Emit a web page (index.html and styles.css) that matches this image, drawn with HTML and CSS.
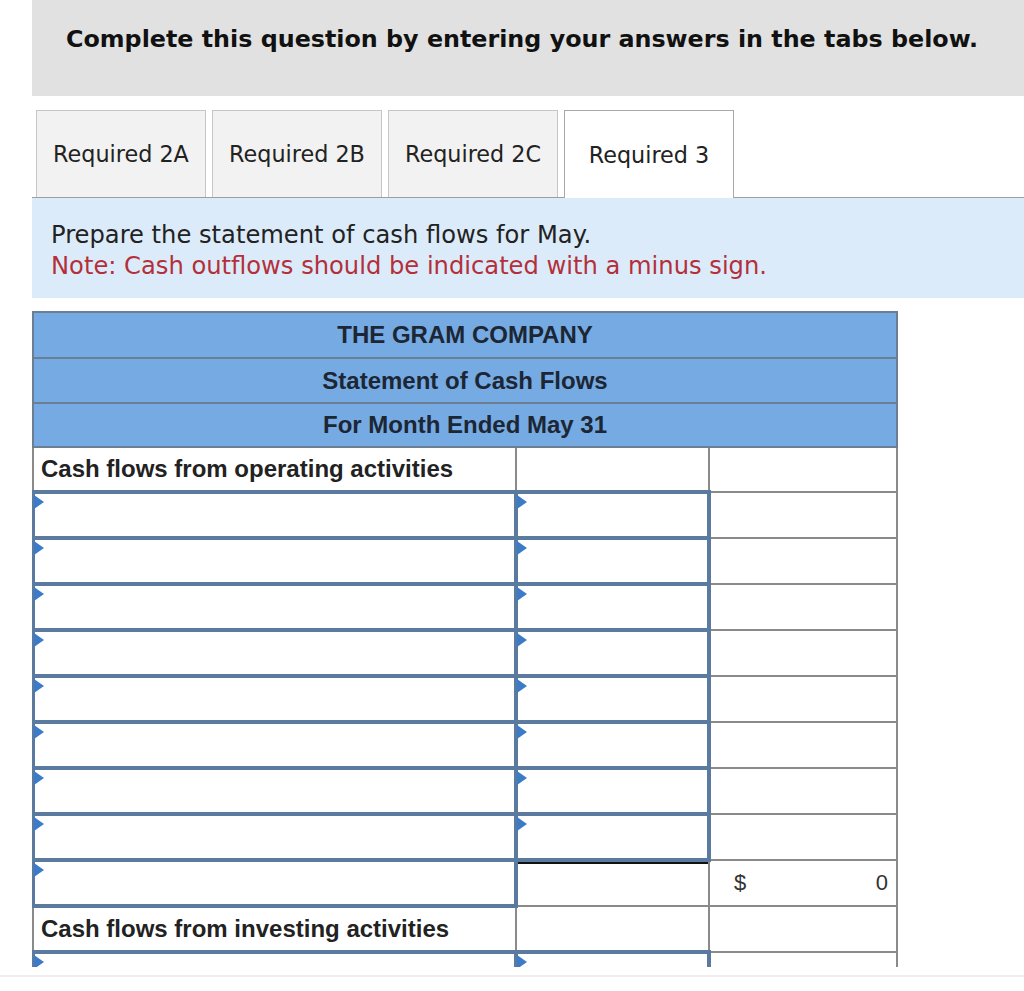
FILE: index.html
```html
<!DOCTYPE html>
<html lang="en">
<head>
<meta charset="utf-8">
<title>Statement of Cash Flows</title>
<link rel="stylesheet" href="styles.css">
</head>
<body>
<div class="page">
  <div class="banner"><h1>Complete this question by entering your answers in the tabs below.</h1></div>
  <div class="tabs">
    <div class="tab">Required 2A</div>
    <div class="tab">Required 2B</div>
    <div class="tab">Required 2C</div>
    <div class="tab active">Required 3</div>
  </div>
  <div class="prompt">
    <p>Prepare the statement of cash flows for May.</p>
    <p class="note">Note: Cash outflows should be indicated with a minus sign.</p>
  </div>
  <div class="sheet-clip">
    <table class="sheet">
      <colgroup><col class="c1"><col class="c2"><col class="c3"></colgroup>
      <tr class="hd h1"><th colspan="3">THE GRAM COMPANY</th></tr>
      <tr class="hd h2"><th colspan="3">Statement of Cash Flows</th></tr>
      <tr class="hd h3"><th colspan="3">For Month Ended May 31</th></tr>
      <tr><td class="label">Cash flows from operating activities</td><td></td><td></td></tr>
      <tr><td class="in"><span class="flag"></span></td><td class="in"><span class="flag"></span></td><td></td></tr>
      <tr><td class="in"><span class="flag"></span></td><td class="in"><span class="flag"></span></td><td></td></tr>
      <tr><td class="in"><span class="flag"></span></td><td class="in"><span class="flag"></span></td><td></td></tr>
      <tr><td class="in"><span class="flag"></span></td><td class="in"><span class="flag"></span></td><td></td></tr>
      <tr><td class="in"><span class="flag"></span></td><td class="in"><span class="flag"></span></td><td></td></tr>
      <tr><td class="in"><span class="flag"></span></td><td class="in"><span class="flag"></span></td><td></td></tr>
      <tr><td class="in"><span class="flag"></span></td><td class="in"><span class="flag"></span></td><td></td></tr>
      <tr><td class="in"><span class="flag"></span></td><td class="in"><span class="flag"></span></td><td></td></tr>
      <tr><td class="in"><span class="flag"></span></td><td class="total"></td><td class="amount"><span>$</span><span>0</span></td></tr>
      <tr><td class="label">Cash flows from investing activities</td><td></td><td></td></tr>
      <tr><td class="in"><span class="flag"></span></td><td class="in"><span class="flag"></span></td><td></td></tr>
    </table>
  </div>
  <div class="footer"></div>
</div>
</body>
</html>
```
FILE: styles.css
```css
html, body {
  margin: 0;
  background: #ffffff;
}
body {
  font-family: "DejaVu Sans", Verdana, sans-serif;
  color: #222222;
}
.page {
  padding-left: 32px;
}
.banner {
  background: #e1e1e1;
  height: 96px;
  box-sizing: border-box;
  padding: 25px 0 0 34px;
}
.banner h1 {
  margin: 0;
  font-size: 23.8px;
  line-height: 28px;
  font-weight: bold;
  color: #111111;
  white-space: nowrap;
}
.tabs {
  margin-top: 14px;
  display: flex;
  align-items: flex-end;
  gap: 6px;
  padding-left: 4px;
  border-bottom: 1px solid #9e9e9e;
  height: 87px;
}
.tab {
  box-sizing: border-box;
  width: 170px;
  height: 87px;
  border: 1px solid #c6c6c6;
  border-bottom: none;
  background: #f2f2f2;
  display: flex;
  align-items: center;
  justify-content: center;
  font-size: 22.3px;
  color: #222222;
}
.tab.active {
  background: #ffffff;
  border-color: #a8a8a8;
  height: 88px;
  margin-bottom: -1px;
}
.prompt {
  background: #dcebf9;
  height: 100px;
  box-sizing: border-box;
  padding: 22px 19px 0;
}
.prompt p {
  margin: 0;
  font-size: 24.2px;
  line-height: 31px;
  color: #222222;
  white-space: nowrap;
}
.prompt .note {
  color: #b3303a;
}
.sheet-clip {
  margin-top: 13px;
  height: 656px;
  overflow: hidden;
}
.sheet {
  width: 864px;
  margin-left: -1px;
  table-layout: fixed;
  border-collapse: collapse;
  font-family: "Liberation Sans", Arial, sans-serif;
  font-size: 24px;
}
.c1 { width: 483px; }
.c2 { width: 193px; }
.c3 { width: 188px; }
.sheet th {
  background: #76aae2;
  color: #1c2634;
  font-weight: bold;
  text-align: center;
  padding: 0;
  border: 2px solid #6a7f94;
}
.hd.h1 th { height: 44px; }
.hd.h2 th { height: 43px; }
.hd.h3 th { height: 42px; }
.sheet td {
  height: 42px;
  padding: 0;
  border: 2px solid #8a8a8a;
  background: #ffffff;
}
.sheet td.label {
  font-weight: bold;
  color: #222222;
  padding-left: 7px;
  white-space: nowrap;
}
.sheet td.in {
  border: 4px solid #5b7a9f;
  position: relative;
}
.flag {
  position: absolute;
  z-index: 2;
  left: -1px;
  top: 1px;
  width: 0;
  height: 0;
  border-left: 10px solid #3b7bc8;
  border-top: 7px solid transparent;
  border-bottom: 7px solid transparent;
}
.sheet td.total {
  box-shadow: inset 0 2px 0 #111111;
}
.sheet td.amount {
  font-size: 22px;
  color: #333333;
}
.sheet td.amount span:first-child {
  float: left;
  margin-left: 24px;
}
.sheet td.amount span:last-child {
  float: right;
  margin-right: 8px;
}
.footer {
  margin-left: -32px;
  margin-top: 8px;
  border-top: 2px solid #eeeeee;
  height: 14px;
}
```
